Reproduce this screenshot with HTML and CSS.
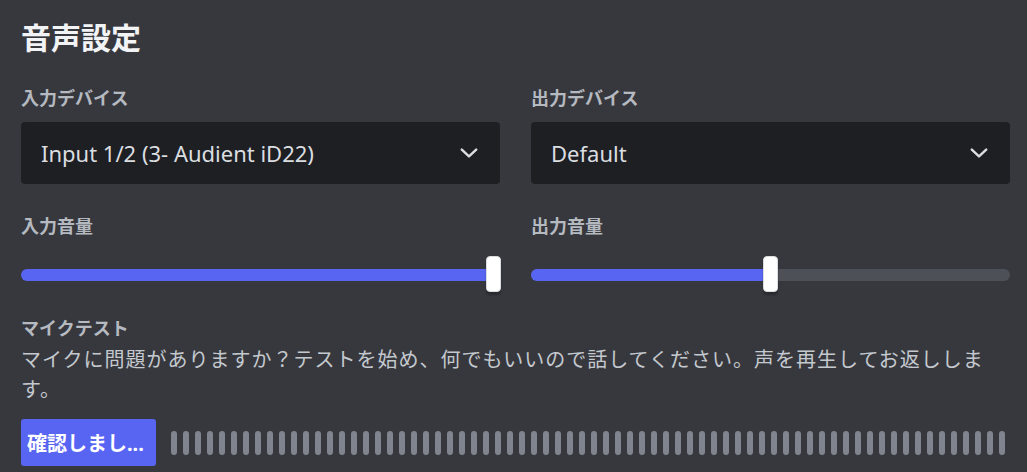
FILE: index.html
```html
<!DOCTYPE html>
<html lang="ja">
<head>
  <meta charset="UTF-8">
  <meta name="viewport" content="width=device-width, initial-scale=1">
  <title>音声設定</title>
  <link rel="stylesheet" href="styles.css">
</head>
<body>
  <div class="page">
    <h1 class="titulo">音声設定</h1>

    <div class="grade">
      <div class="coluna">
        <div class="rotulo">入力デバイス</div>
        <div class="seletor">
          <span>Input 1/2 (3- Audient iD22)</span>
          <svg class="seta" width="18" height="10" viewBox="0 0 18 10"><path d="M1.8 1.6 L9 8.4 L16.2 1.6" fill="none" stroke="#dbdee1" stroke-width="2.4" stroke-linecap="round" stroke-linejoin="round"/></svg>
        </div>
        <div class="rotulo rotulo-volume">入力音量</div>
        <div class="slider">
          <div class="trilha"><div class="preenchido" style="width: 479px"></div></div>
          <div class="alca" style="left: 465px"></div>
        </div>
      </div>

      <div class="coluna">
        <div class="rotulo">出力デバイス</div>
        <div class="seletor">
          <span>Default</span>
          <svg class="seta" width="18" height="10" viewBox="0 0 18 10"><path d="M1.8 1.6 L9 8.4 L16.2 1.6" fill="none" stroke="#dbdee1" stroke-width="2.4" stroke-linecap="round" stroke-linejoin="round"/></svg>
        </div>
        <div class="rotulo rotulo-volume">出力音量</div>
        <div class="slider">
          <div class="trilha"><div class="preenchido" style="width: 239px"></div></div>
          <div class="alca" style="left: 232px"></div>
        </div>
      </div>
    </div>

    <div class="rotulo rotulo-teste">マイクテスト</div>
    <p class="descricao">マイクに問題がありますか？テストを始め、何でもいいので話してください。声を再生してお返しします。</p>

    <div class="teste">
      <button class="botao">確認しまし...</button>
      <div class="medidor" id="medidor"></div>
    </div>
  </div>

  <script>
    // barras do medidor de volume
    const medidor = document.getElementById('medidor');
    for (let i = 0; i < 70; i++) {
      const barra = document.createElement('span');
      barra.className = 'barra';
      medidor.appendChild(barra);
    }
  </script>
</body>
</html>
```

FILE: styles.css
```css
body {
  margin: 0;
  background-color: #37383e;
  font-family: "Noto Sans", "Noto Sans CJK JP", sans-serif;
  color: #dbdee1;
}
.page {
  padding: 20px 17px 0 21px;
}
.titulo {
  margin: 0;
  font-size: 30px;
  line-height: 36px;
  font-weight: 700;
  color: #f2f3f5;
}
.grade {
  display: grid;
  grid-template-columns: 1fr 1fr;
  column-gap: 31px;
}
.rotulo {
  margin-top: 30px;
  font-size: 18px;
  line-height: 24px;
  font-weight: 700;
  color: #b5bac1;
}
.seletor {
  margin-top: 12px;
  height: 62px;
  box-sizing: border-box;
  padding: 0 22px 0 20px;
  background-color: #1e1f22;
  border-radius: 4px;
  display: flex;
  align-items: center;
  justify-content: space-between;
  font-size: 22px;
  color: #dbdee1;
}
.rotulo-volume {
  margin-top: 30px;
}
.slider {
  position: relative;
  margin-top: 18px;
  height: 36px;
  display: flex;
  align-items: center;
}
.trilha {
  width: 100%;
  height: 12px;
  margin-top: 1px;
  background-color: #4e5058;
  border-radius: 6px;
  overflow: hidden;
}
.preenchido {
  height: 100%;
  background-color: #5865f2;
}
.alca {
  position: absolute;
  top: 0;
  width: 15px;
  height: 36px;
  box-sizing: border-box;
  background-color: #fff;
  border: 1px solid #dbdee1;
  border-radius: 4px;
  box-shadow: 0 3px 2px rgba(0, 0, 0, 0.25);
}
.rotulo-teste {
  margin-top: 24px;
}
.descricao {
  margin: 5px 0 0;
  padding-right: 10px;
  font-size: 20px;
  letter-spacing: 1px;
  line-height: 30px;
  color: #c4c9ce;
}
.teste {
  margin-top: 14px;
  display: flex;
  align-items: center;
}
.botao {
  width: 135px;
  height: 47px;
  padding: 0 0 0 6px;
  border: none;
  border-radius: 3px;
  background-color: #5865f2;
  color: #fff;
  font-family: inherit;
  font-size: 20px;
  font-weight: 700;
  text-align: left;
  white-space: nowrap;
  overflow: hidden;
}
.medidor {
  margin-left: 15px;
  display: flex;
  gap: 6px;
}
.barra {
  width: 6px;
  height: 24px;
  border-radius: 3px;
  background-color: #80848e;
}
```
